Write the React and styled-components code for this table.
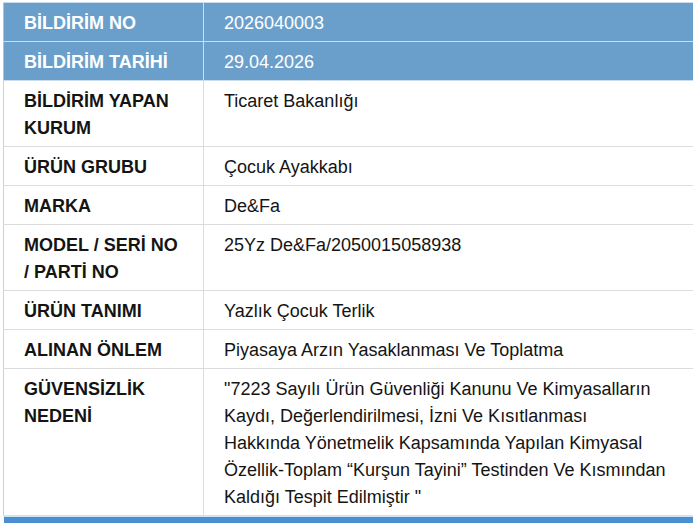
import React from "react";
import styled, { createGlobalStyle } from "styled-components";

const Global = createGlobalStyle`
  html, body { margin: 0; padding: 0; background: #fff; overflow: hidden; }
  body { font-family: "Liberation Sans", Arial, sans-serif; }
`;

const Page = styled.div`
  padding: 2px 0 0 3px;
  width: 693px;
  height: 523px;
  box-sizing: border-box;
  overflow: hidden;
`;

const Table = styled.table`
  border-collapse: collapse;
  width: 720px;
  table-layout: fixed;
  font-size: 18px;
  line-height: 27px;
  color: #141414;
`;

const Row = styled.tr`
  background: ${(p) => (p.$head ? "#6b9fcb" : "#fff")};
  color: ${(p) => (p.$head ? "#fff" : "#141414")};
`;

const Label = styled.th`
  width: 200px;
  box-sizing: border-box;
  text-align: left;
  vertical-align: top;
  font-weight: bold;
  padding: 7px 20px 4px 20px;
  border: 1px solid ${(p) => (p.$head ? "#c9ddef" : "#dcdcdc")};
  border-left-color: ${(p) => (p.$head ? "#a9c4dc" : "#cfcfcf")};
`;

const Value = styled.td`
  text-align: left;
  vertical-align: top;
  padding: 7px 20px 4px 20px;
  white-space: nowrap;
  border: 1px solid ${(p) => (p.$head ? "#c9ddef" : "#dcdcdc")};
`;

const Bar = styled.tr`
  td {
    height: 8px;
    padding: 0;
    background: #4a8fd2;
    border-top: 2px solid #cfe3f5;
  }
`;

const rows = [
  { k: "BİLDİRİM NO", v: ["2026040003"], head: true },
  { k: "BİLDİRİM TARİHİ", v: ["29.04.2026"], head: true },
  { k: "BİLDİRİM YAPAN KURUM", v: ["Ticaret Bakanlığı"] },
  { k: "ÜRÜN GRUBU", v: ["Çocuk Ayakkabı"] },
  { k: "MARKA", v: ["De&Fa"] },
  { k: "MODEL / SERİ NO / PARTİ NO", v: ["25Yz De&Fa/2050015058938"] },
  { k: "ÜRÜN TANIMI", v: ["Yazlık Çocuk Terlik"] },
  { k: "ALINAN ÖNLEM", v: ["Piyasaya Arzın Yasaklanması Ve Toplatma"] },
  {
    k: "GÜVENSİZLİK NEDENİ",
    v: [
      "\"7223 Sayılı Ürün Güvenliği Kanunu Ve Kimyasalların",
      "Kaydı, Değerlendirilmesi, İzni Ve Kısıtlanması",
      "Hakkında Yönetmelik Kapsamında Yapılan Kimyasal",
      "Özellik-Toplam “Kurşun Tayini” Testinden Ve Kısmından",
      "Kaldığı Tespit Edilmiştir \"",
    ],
  },
];

export default function App() {
  return (
    <>
      <Global />
      <Page>
        <Table>
          <tbody>
            {rows.map((r) => (
              <Row key={r.k} $head={r.head}>
                <Label $head={r.head}>{r.k}</Label>
                <Value $head={r.head}>
                  {r.v.map((line, i) => (
                    <React.Fragment key={i}>
                      {i > 0 && <br />}
                      {line}
                    </React.Fragment>
                  ))}
                </Value>
              </Row>
            ))}
            <Bar>
              <td colSpan={2} />
            </Bar>
          </tbody>
        </Table>
      </Page>
    </>
  );
}
